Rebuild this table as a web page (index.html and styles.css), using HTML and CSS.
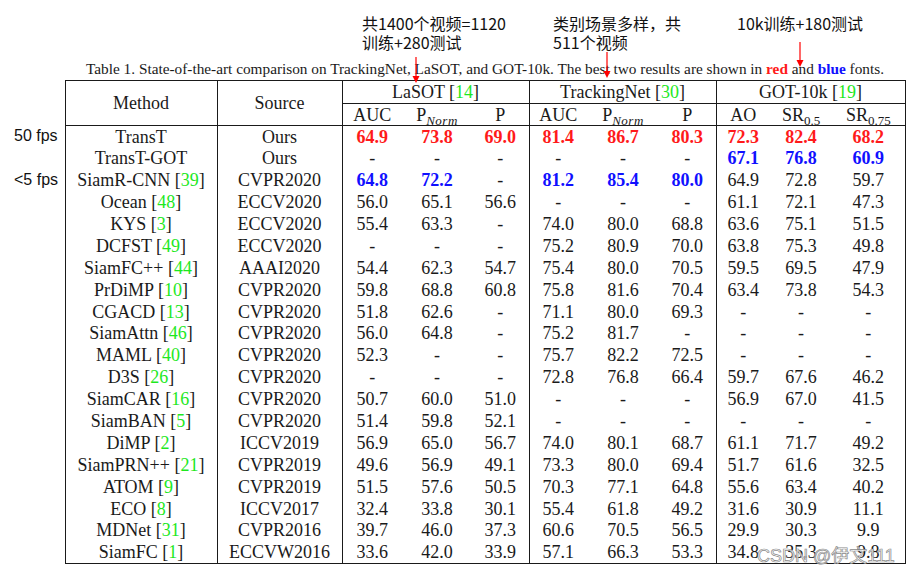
FILE: index.html
```html
<!DOCTYPE html>
<html>
<head>
<meta charset="utf-8">
<link rel="stylesheet" href="styles.css">
</head>
<body>
<div class="page">
  <div class="notes">
    <div class="note n1">共1400个视频=1120<br>训练+280测试</div>
    <div class="note n2">类别场景多样，共<br>511个视频</div>
    <div class="note n3">10k训练+180测试</div>
  </div>
  <p class="caption">Table 1. State-of-the-art comparison on TrackingNet, LaSOT, and GOT-10k. The best two results are shown in <b class="r">red</b> and <b class="b">blue</b> fonts.</p>
  <table class="results">
    <colgroup>
      <col class="c-lbl"><col class="c-m"><col class="c-s">
      <col class="c-auc"><col class="c-pn"><col class="c-p">
      <col class="c-auc2"><col class="c-pn2"><col class="c-p2">
      <col class="c-ao"><col class="c-sr5"><col class="c-sr75">
    </colgroup>
    <thead>
      <tr class="h1">
        <th class="lbl" rowspan="2"></th>
        <th class="hm" rowspan="2">Method</th>
        <th class="hm" rowspan="2">Source</th>
        <th class="grp" colspan="3">LaSOT [<span class="g">14</span>]</th>
        <th class="grp" colspan="3">TrackingNet [<span class="g">30</span>]</th>
        <th class="grp" colspan="3">GOT-10k [<span class="g">19</span>]</th>
      </tr>
      <tr class="h2">
        <th class="gs">AUC</th><th>P<sub class="it">Norm</sub></th><th class="ge">P</th>
        <th class="gs">AUC</th><th>P<sub class="it">Norm</sub></th><th class="ge">P</th>
        <th class="gs">AO</th><th>SR<sub>0.5</sub></th><th class="ge">SR<sub>0.75</sub></th>
      </tr>
    </thead>
    <tbody>
      <tr><td class="lbl">50 fps</td><td>TransT</td><td>Ours</td><td class="r">64.9</td><td class="r">73.8</td><td class="r">69.0</td><td class="r">81.4</td><td class="r">86.7</td><td class="r">80.3</td><td class="r">72.3</td><td class="r">82.4</td><td class="r">68.2</td></tr>
      <tr><td class="lbl"></td><td>TransT-GOT</td><td>Ours</td><td>-</td><td>-</td><td>-</td><td>-</td><td>-</td><td>-</td><td class="b">67.1</td><td class="b">76.8</td><td class="b">60.9</td></tr>
      <tr><td class="lbl">&lt;5 fps</td><td>SiamR-CNN [<span class="g">39</span>]</td><td>CVPR2020</td><td class="b">64.8</td><td class="b">72.2</td><td>-</td><td class="b">81.2</td><td class="b">85.4</td><td class="b">80.0</td><td>64.9</td><td>72.8</td><td>59.7</td></tr>
      <tr><td class="lbl"></td><td>Ocean [<span class="g">48</span>]</td><td>ECCV2020</td><td>56.0</td><td>65.1</td><td>56.6</td><td>-</td><td>-</td><td>-</td><td>61.1</td><td>72.1</td><td>47.3</td></tr>
      <tr><td class="lbl"></td><td>KYS [<span class="g">3</span>]</td><td>ECCV2020</td><td>55.4</td><td>63.3</td><td>-</td><td>74.0</td><td>80.0</td><td>68.8</td><td>63.6</td><td>75.1</td><td>51.5</td></tr>
      <tr><td class="lbl"></td><td>DCFST [<span class="g">49</span>]</td><td>ECCV2020</td><td>-</td><td>-</td><td>-</td><td>75.2</td><td>80.9</td><td>70.0</td><td>63.8</td><td>75.3</td><td>49.8</td></tr>
      <tr><td class="lbl"></td><td>SiamFC++ [<span class="g">44</span>]</td><td>AAAI2020</td><td>54.4</td><td>62.3</td><td>54.7</td><td>75.4</td><td>80.0</td><td>70.5</td><td>59.5</td><td>69.5</td><td>47.9</td></tr>
      <tr><td class="lbl"></td><td>PrDiMP [<span class="g">10</span>]</td><td>CVPR2020</td><td>59.8</td><td>68.8</td><td>60.8</td><td>75.8</td><td>81.6</td><td>70.4</td><td>63.4</td><td>73.8</td><td>54.3</td></tr>
      <tr><td class="lbl"></td><td>CGACD [<span class="g">13</span>]</td><td>CVPR2020</td><td>51.8</td><td>62.6</td><td>-</td><td>71.1</td><td>80.0</td><td>69.3</td><td>-</td><td>-</td><td>-</td></tr>
      <tr><td class="lbl"></td><td>SiamAttn [<span class="g">46</span>]</td><td>CVPR2020</td><td>56.0</td><td>64.8</td><td>-</td><td>75.2</td><td>81.7</td><td>-</td><td>-</td><td>-</td><td>-</td></tr>
      <tr><td class="lbl"></td><td>MAML [<span class="g">40</span>]</td><td>CVPR2020</td><td>52.3</td><td>-</td><td>-</td><td>75.7</td><td>82.2</td><td>72.5</td><td>-</td><td>-</td><td>-</td></tr>
      <tr><td class="lbl"></td><td>D3S [<span class="g">26</span>]</td><td>CVPR2020</td><td>-</td><td>-</td><td>-</td><td>72.8</td><td>76.8</td><td>66.4</td><td>59.7</td><td>67.6</td><td>46.2</td></tr>
      <tr><td class="lbl"></td><td>SiamCAR [<span class="g">16</span>]</td><td>CVPR2020</td><td>50.7</td><td>60.0</td><td>51.0</td><td>-</td><td>-</td><td>-</td><td>56.9</td><td>67.0</td><td>41.5</td></tr>
      <tr><td class="lbl"></td><td>SiamBAN [<span class="g">5</span>]</td><td>CVPR2020</td><td>51.4</td><td>59.8</td><td>52.1</td><td>-</td><td>-</td><td>-</td><td>-</td><td>-</td><td>-</td></tr>
      <tr><td class="lbl"></td><td>DiMP [<span class="g">2</span>]</td><td>ICCV2019</td><td>56.9</td><td>65.0</td><td>56.7</td><td>74.0</td><td>80.1</td><td>68.7</td><td>61.1</td><td>71.7</td><td>49.2</td></tr>
      <tr><td class="lbl"></td><td>SiamPRN++ [<span class="g">21</span>]</td><td>CVPR2019</td><td>49.6</td><td>56.9</td><td>49.1</td><td>73.3</td><td>80.0</td><td>69.4</td><td>51.7</td><td>61.6</td><td>32.5</td></tr>
      <tr><td class="lbl"></td><td>ATOM [<span class="g">9</span>]</td><td>CVPR2019</td><td>51.5</td><td>57.6</td><td>50.5</td><td>70.3</td><td>77.1</td><td>64.8</td><td>55.6</td><td>63.4</td><td>40.2</td></tr>
      <tr><td class="lbl"></td><td>ECO [<span class="g">8</span>]</td><td>ICCV2017</td><td>32.4</td><td>33.8</td><td>30.1</td><td>55.4</td><td>61.8</td><td>49.2</td><td>31.6</td><td>30.9</td><td>11.1</td></tr>
      <tr><td class="lbl"></td><td>MDNet [<span class="g">31</span>]</td><td>CVPR2016</td><td>39.7</td><td>46.0</td><td>37.3</td><td>60.6</td><td>70.5</td><td>56.5</td><td>29.9</td><td>30.3</td><td>9.9</td></tr>
      <tr><td class="lbl"></td><td>SiamFC [<span class="g">1</span>]</td><td>ECCVW2016</td><td>33.6</td><td>42.0</td><td>33.9</td><td>57.1</td><td>66.3</td><td>53.3</td><td>34.8</td><td>35.3</td><td>9.8</td></tr>
    </tbody>
  </table>
  <svg class="arrows" width="920" height="578" viewBox="0 0 920 578">
    <g stroke="#ff0000" stroke-width="1.2" fill="#ff0000">
      <line x1="416" y1="57" x2="416" y2="77"/>
      <polygon points="412.5,76 419.5,76 416,83" stroke="none"/>
      <line x1="607" y1="52" x2="607" y2="72"/>
      <polygon points="603.5,71 610.5,71 607,78" stroke="none"/>
      <line x1="800" y1="42" x2="800" y2="61"/>
      <polygon points="796.5,60 803.5,60 800,67" stroke="none"/>
    </g>
  </svg>
  <div class="watermark">CSDN @伊文111</div>
</div>
</body>
</html>
```

FILE: styles.css
```css
html, body {
  margin: 0;
  padding: 0;
  background: #ffffff;
}

.page {
  position: relative;
  width: 920px;
  height: 578px;
  overflow: hidden;
  color: #1a1a1a;
  font-family: "Liberation Serif", "Times New Roman", serif;
}

.notes {
  display: flex;
  height: 58px;
  box-sizing: border-box;
  padding: 14px 0 0 362px;
  font-family: "Noto Sans CJK SC", "Liberation Sans", sans-serif;
  font-size: 16px;
  line-height: 19px;
  color: #111;
}

.note {
  white-space: nowrap;
}

.n1 { width: 191px; }
.n2 { width: 184px; }

.caption {
  margin: 0 0 0 65px;
  width: 840px;
  height: 22px;
  text-align: center;
  font-size: 15.3px;
  line-height: 21px;
  white-space: nowrap;
}

.r { color: #ff1a1a; font-weight: bold; }
.b { color: #1010ff; font-weight: bold; }
.g { color: #1ee81e; }

.results {
  border-collapse: collapse;
  table-layout: fixed;
  width: 905px;
  font-size: 18px;
}

.c-lbl { width: 65px; }
.c-m { width: 152px; }
.c-s { width: 125px; }
.c-auc { width: 60px; }
.c-pn { width: 70px; }
.c-p { width: 57px; }
.c-auc2 { width: 58px; }
.c-pn2 { width: 72px; }
.c-p2 { width: 57px; }
.c-ao { width: 54px; }
.c-sr5 { width: 62px; }
.c-sr75 { width: 73px; }

.results th,
.results td {
  padding: 0;
  text-align: center;
  font-weight: normal;
  white-space: nowrap;
  line-height: 20px;
}

.results td.r { font-weight: bold; }
.results td.b { font-weight: bold; }

.h1 { height: 23px; }
.h2 { height: 22px; }
.results tbody tr { height: 21.9px; }

.results .lbl {
  text-align: left;
  padding-left: 14px;
  font-family: "Liberation Sans", Arial, sans-serif;
  font-size: 16px;
  color: #111;
  border: none;
}

.hm,
.grp {
  border: 1px solid #1a1a1a;
}

.h2 th {
  border-bottom: 1px solid #1a1a1a;
}

.h2 th.gs { border-left: 1px solid #1a1a1a; }
.h2 th:last-child { border-right: 1px solid #1a1a1a; }

.results tbody td:nth-child(2) { border-left: 1px solid #1a1a1a; }
.results tbody td:nth-child(2),
.results tbody td:nth-child(3),
.results tbody td:nth-child(6),
.results tbody td:nth-child(9),
.results tbody td:nth-child(12) {
  border-right: 1px solid #1a1a1a;
}

.results tbody tr:last-child td:not(.lbl) {
  border-bottom: 1px solid #1a1a1a;
}

.results sub {
  font-size: 13px;
  line-height: 0;
  vertical-align: -4px;
}

.results sub.it {
  font-style: italic;
  letter-spacing: 0.5px;
}

.arrows {
  position: absolute;
  left: 0;
  top: 0;
  pointer-events: none;
}

.watermark {
  position: absolute;
  left: 757px;
  top: 544px;
  font-family: "Liberation Sans", "Noto Sans CJK SC", sans-serif;
  font-size: 18px;
  line-height: 24px;
  color: rgba(255, 255, 255, 0.85);
  -webkit-text-stroke: 0.7px #8a8a8a;
  white-space: nowrap;
}
```
